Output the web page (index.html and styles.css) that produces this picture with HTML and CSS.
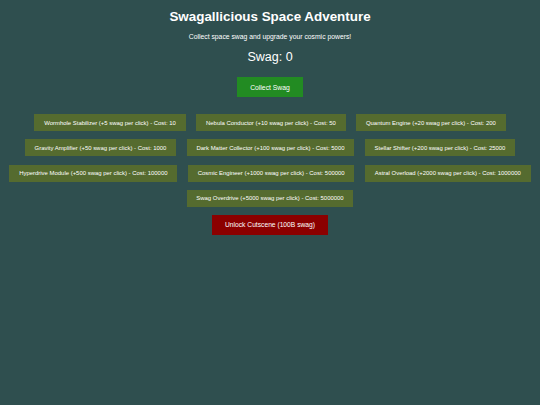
FILE: index.html
```html
<!DOCTYPE html>
<html lang="en">
<head>
    <meta charset="UTF-8">
    <meta name="viewport" content="width=device-width, initial-scale=1.0">
    <title>Swagallicious Space Adventure</title>
    <link rel="stylesheet" href="styles.css">
</head>
<body>
    <div class="jogo">
        <h1 class="titulo">Swagallicious Space Adventure</h1>
        <p class="subtitulo">Collect space swag and upgrade your cosmic powers!</p>
        <div class="contador">Swag: <span id="swag">0</span></div>

        <button class="botao-coletar" id="coletar">Collect Swag</button>

        <div class="upgrades">
            <button class="upgrade">Wormhole Stabilizer (+5 swag per click) - Cost: 10</button>
            <button class="upgrade">Nebula Conductor (+10 swag per click) - Cost: 50</button>
            <button class="upgrade">Quantum Engine (+20 swag per click) - Cost: 200</button>
            <button class="upgrade">Gravity Amplifier (+50 swag per click) - Cost: 1000</button>
            <button class="upgrade">Dark Matter Collector (+100 swag per click) - Cost: 5000</button>
            <button class="upgrade">Stellar Shifter (+200 swag per click) - Cost: 25000</button>
            <button class="upgrade">Hyperdrive Module (+500 swag per click) - Cost: 100000</button>
            <button class="upgrade">Cosmic Engineer (+1000 swag per click) - Cost: 500000</button>
            <button class="upgrade">Astral Overload (+2000 swag per click) - Cost: 1000000</button>
            <button class="upgrade">Swag Overdrive (+5000 swag per click) - Cost: 5000000</button>
        </div>

        <button class="botao-cutscene">Unlock Cutscene (100B swag)</button>
    </div>
</body>
</html>
```

FILE: styles.css
```css
body {
    margin: 0;
    background-color: #2f4f4f;
    color: #ffffff;
    font-family: 'Liberation Sans', Arial, sans-serif;
}

.jogo {
    display: flex;
    flex-direction: column;
    align-items: center;
    padding: 9px 4px 0;
}

.titulo {
    margin: 0;
    font-size: 13.4px;
    line-height: 15px;
    font-weight: bold;
}

.subtitulo {
    margin: 9px 0 0;
    font-size: 6.8px;
    line-height: 8px;
}

.contador {
    margin-top: 9px;
    font-size: 12.5px;
    line-height: 14px;
}

button {
    font-family: 'Liberation Sans', Arial, sans-serif;
    color: #ffffff;
    border: none;
    cursor: pointer;
}

.botao-coletar {
    margin-top: 13px;
    height: 20px;
    padding: 0 13.4px;
    font-size: 6.8px;
    background-color: #228b22;
}

.upgrades {
    margin-top: 17px;
    display: flex;
    flex-wrap: wrap;
    justify-content: center;
    column-gap: 10.5px;
    row-gap: 8.3px;
    width: 532px;
}

.upgrade {
    height: 17px;
    padding: 0 9.8px;
    font-size: 5.95px;
    background-color: #556b2f;
}

.botao-cutscene {
    margin-top: 8px;
    height: 20px;
    padding: 0 13.5px;
    font-size: 6.7px;
    background-color: #8b0000;
}
```
